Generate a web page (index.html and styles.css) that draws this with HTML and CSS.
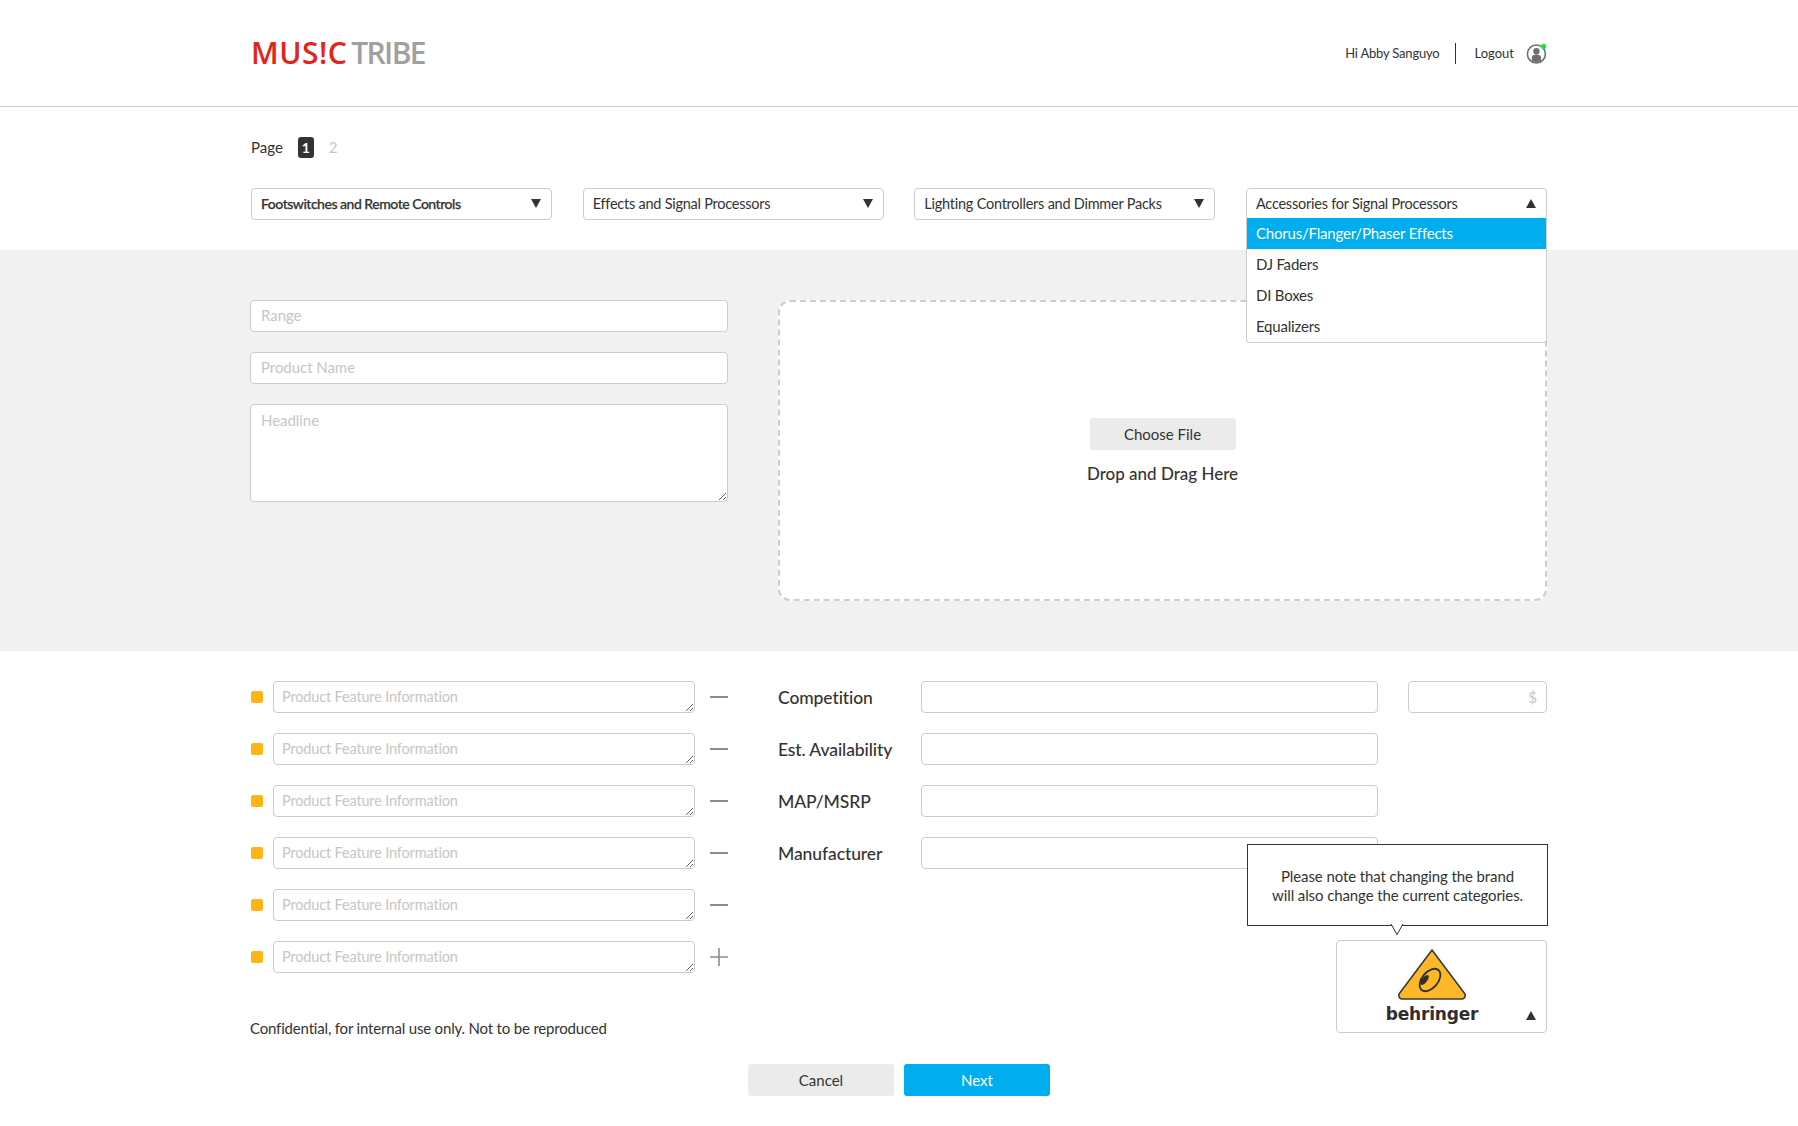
FILE: index.html
```html
<!DOCTYPE html>
<html lang="en">
<head>
    <meta charset="UTF-8">
    <meta name="viewport" content="width=device-width, initial-scale=1.0">
    <title>Music Tribe - New Product</title>
    <link rel="stylesheet" href="styles.css">
</head>
<body>
    <header class="site-header">
        <div class="wrap header-inner">
            <div class="logo"><span class="logo-red">MUS!C</span><span class="logo-grey">TRIBE</span></div>
            <div class="user-area">
                <span class="user-name">Hi Abby Sanguyo</span>
                <span class="user-sep"></span>
                <a class="logout">Logout</a>
                <span class="avatar">
                    <svg width="21" height="21" viewBox="0 0 21 21">
                        <circle cx="10.4" cy="11" r="9" fill="#fff" stroke="#6f6f6f" stroke-width="1.6"/>
                        <circle cx="10.4" cy="8.2" r="3.2" fill="#6f6f6f"/>
                        <path d="M5.8 17.8 V14.6 C5.8 12.4 7.6 11.4 10.4 11.4 C13.2 11.4 15 12.4 15 14.6 V17.8 C12.4 19.4 8.4 19.4 5.8 17.8 Z" fill="#6f6f6f"/>
                        <circle cx="17.6" cy="3.4" r="2.6" fill="#22e33a"/>
                    </svg>
                </span>
            </div>
        </div>
    </header>

    <section class="wrap top-section">
        <div class="pager">
            <span class="pager-label">Page</span>
            <span class="pager-current">1</span>
            <span class="pager-other">2</span>
        </div>
        <div class="select-row">
            <div class="select select-strong"><span>Footswitches and Remote Controls</span><i class="caret-down"></i></div>
            <div class="select"><span>Effects and Signal Processors</span><i class="caret-down"></i></div>
            <div class="select"><span>Lighting Controllers and Dimmer Packs</span><i class="caret-down"></i></div>
            <div class="select select-open">
                <span>Accessories for Signal Processors</span><i class="caret-up"></i>
                <ul class="select-menu">
                    <li class="active">Chorus/Flanger/Phaser Effects</li>
                    <li>DJ Faders</li>
                    <li>DI Boxes</li>
                    <li>Equalizers</li>
                </ul>
            </div>
        </div>
    </section>

    <section class="grey-band">
        <div class="wrap band-inner">
            <div class="band-fields">
                <input type="text" class="field" placeholder="Range">
                <input type="text" class="field" placeholder="Product Name">
                <textarea class="field field-headline" placeholder="Headline"></textarea>
            </div>
            <div class="dropzone">
                <button class="btn btn-grey">Choose File</button>
                <p class="drop-text">Drop and Drag Here</p>
            </div>
        </div>
    </section>

    <section class="wrap details">
        <div class="features">
            <div class="feature-row">
                <span class="bullet"></span>
                <textarea class="field field-feature" placeholder="Product Feature Information"></textarea>
                <span class="dash"></span>
            </div>
            <div class="feature-row">
                <span class="bullet"></span>
                <textarea class="field field-feature" placeholder="Product Feature Information"></textarea>
                <span class="dash"></span>
            </div>
            <div class="feature-row">
                <span class="bullet"></span>
                <textarea class="field field-feature" placeholder="Product Feature Information"></textarea>
                <span class="dash"></span>
            </div>
            <div class="feature-row">
                <span class="bullet"></span>
                <textarea class="field field-feature" placeholder="Product Feature Information"></textarea>
                <span class="dash"></span>
            </div>
            <div class="feature-row">
                <span class="bullet"></span>
                <textarea class="field field-feature" placeholder="Product Feature Information"></textarea>
                <span class="dash"></span>
            </div>
            <div class="feature-row">
                <span class="bullet"></span>
                <textarea class="field field-feature" placeholder="Product Feature Information"></textarea>
                <svg class="plus" width="18" height="18" viewBox="0 0 18 18">
                    <path d="M0 9 H18 M9 0 V18" stroke="#8c8c8c" stroke-width="1.6" fill="none"/>
                </svg>
            </div>
            <p class="confidential">Confidential, for internal use only. Not to be reproduced</p>
        </div>

        <div class="product-info">
            <div class="info-row">
                <label class="info-label">Competition</label>
                <input type="text" class="field info-input">
                <input type="text" class="field price-input" placeholder="$">
            </div>
            <div class="info-row">
                <label class="info-label">Est. Availability</label>
                <input type="text" class="field info-input">
            </div>
            <div class="info-row">
                <label class="info-label">MAP/MSRP</label>
                <input type="text" class="field info-input">
            </div>
            <div class="info-row">
                <label class="info-label">Manufacturer</label>
                <input type="text" class="field info-input">
            </div>
            <div class="brand-area">
                <div class="tooltip">
                    Please note that changing the brand<br>will also change the current categories.
                    <svg class="tooltip-arrow" width="14" height="12" viewBox="0 0 14 12">
                        <path d="M1 0 L7 10.5 L13 0" fill="#fff" stroke="#333" stroke-width="1"/>
                    </svg>
                </div>
                <div class="brand-box">
                    <div class="brand-logo">
                        <svg width="72" height="52" viewBox="0 0 72 52">
                            <path d="M36 1 L69 45 Q70 50 65 50 H7 Q2 50 3 45 Z" fill="#fdb827" stroke="#3a3a3a" stroke-width="1.6" stroke-linejoin="round"/>
                            <ellipse cx="34" cy="31" rx="13" ry="8" transform="rotate(-50 34 31)" fill="none" stroke="#2e2e2e" stroke-width="1.8"/>
                            <ellipse cx="28.5" cy="31" rx="2.6" ry="6" transform="rotate(40 28.5 31)" fill="#2e2e2e"/>
                        </svg>
                        <span class="brand-name">behringer</span>
                    </div>
                    <i class="caret-up"></i>
                </div>
            </div>
        </div>
    </section>

    <div class="actions">
        <button class="btn btn-grey">Cancel</button>
        <button class="btn btn-blue">Next</button>
    </div>
</body>
</html>
```

FILE: styles.css
```css
/* Page basics */
* {
    box-sizing: border-box;
}
body {
    margin: 0;
    height: 1126px;
    overflow: hidden;
    background-color: #fff;
    font-family: "Lato", "Open Sans", Arial, sans-serif;
    font-size: 15px;
    color: #333;
}
.wrap {
    width: 1297px;
    margin: 0 251px 0 250px;
}

/* Header */
.site-header {
    height: 107px;
    border-bottom: 1px solid #ccc;
}
.header-inner {
    height: 106px;
    display: flex;
    align-items: center;
    justify-content: space-between;
    padding: 0 0 0 1px;
}
.logo {
    display: flex;
    align-items: center;
    gap: 4px;
    font-family: "Open Sans", Arial, sans-serif;
    font-size: 30px;
    line-height: 30px;
}
.logo-red {
    color: #e1251b;
    font-weight: 600;
    letter-spacing: 0.5px;
}
.logo-grey {
    color: #a0a0a0;
    font-weight: 600;
    letter-spacing: -1.6px;
}
.user-area {
    display: flex;
    align-items: center;
    font-size: 13px;
    color: #333;
}
.user-name {
    letter-spacing: -0.2px;
}
.user-sep {
    width: 1px;
    height: 21px;
    margin: 0 19px 0 15px;
    background-color: #333;
}
.avatar {
    display: flex;
    margin-left: 12px;
}

/* Pager + category selects */
.top-section {
    height: 143px;
    padding: 0 0 0 1px;
}
.pager {
    height: 81px;
    display: flex;
    align-items: center;
    padding-bottom: 1px;
}
.pager-label {
    font-size: 15px;
    margin-right: 15px;
}
.pager-current {
    width: 16px;
    height: 21px;
    line-height: 21px;
    margin-right: 15px;
    text-align: center;
    background-color: #333;
    color: #fff;
    border-radius: 3px;
    font-weight: 700;
    font-size: 14px;
}
.pager-other {
    width: 10px;
    font-size: 15px;
    color: #c8c8c8;
}
.select-row {
    display: flex;
    justify-content: space-between;
}
.select {
    position: relative;
    width: 301px;
    height: 32px;
    padding: 0 10px 2px 9px;
    display: flex;
    align-items: center;
    justify-content: space-between;
    background-color: #fff;
    border: 1px solid #ccc;
    border-radius: 4px;
    font-size: 14.5px;
    letter-spacing: -0.24px;
}
.select-strong {
    font-size: 14px;
    font-weight: 500;
    letter-spacing: -0.48px;
    -webkit-text-stroke: 0.25px #333;
}
.select-open {
    z-index: 5;
}
.caret-down, .caret-up {
    display: block;
    width: 0;
    height: 0;
    border-left: 5px solid transparent;
    border-right: 5px solid transparent;
}
.caret-down {
    border-top: 9px solid #333;
}
.caret-up {
    border-bottom: 9px solid #333;
}
.select-menu {
    position: absolute;
    left: -1px;
    right: -1px;
    top: 29px;
    margin: 0;
    padding: 0;
    list-style: none;
    font-size: 15px;
    letter-spacing: -0.2px;
    background-color: #fff;
    border: 1px solid #ccc;
    border-top: none;
    border-radius: 0 0 4px 4px;
}
.select-menu li {
    height: 31px;
    line-height: 31px;
    padding: 0 9px;
}
.select-menu li.active {
    background-color: #00adef;
    color: #fff;
}

/* Grey band */
.grey-band {
    height: 401px;
    padding-top: 50px;
    background-color: #f1f1f1;
}
.band-inner {
    display: flex;
    justify-content: space-between;
}
.band-fields {
    width: 478px;
    display: flex;
    flex-direction: column;
    gap: 20px;
}
.band-fields .field {
    padding-left: 10px;
    padding-bottom: 2px;
    letter-spacing: -0.05px;
}
.field {
    display: block;
    height: 32px;
    padding: 0 9px;
    background-color: #fff;
    border: 1px solid #ccc;
    border-radius: 4px;
    font-family: inherit;
    font-size: 15px;
    color: #333;
    outline: none;
}
.field::placeholder {
    color: #c6c6c6;
    opacity: 1;
}
textarea.field {
    padding-top: 5px;
    line-height: 20px;
    resize: both;
}
.field-headline {
    width: 478px;
    height: 98px;
}
.dropzone {
    width: 769px;
    height: 301px;
    padding-top: 2px;
    display: flex;
    flex-direction: column;
    align-items: center;
    justify-content: center;
    border: 2px dashed #cdcdcd;
    border-radius: 12px;
    background-color: #fff;
}
.drop-text {
    margin: 13px 0 0;
    font-size: 17px;
    font-weight: 500;
    line-height: 22px;
}

/* Buttons */
.btn {
    width: 146px;
    height: 32px;
    border: none;
    border-radius: 3px;
    font-family: inherit;
    font-size: 15px;
    cursor: pointer;
}
.btn-grey {
    background-color: #ebebeb;
    color: #333;
}
.btn-blue {
    background-color: #00adef;
    color: #fff;
}

/* Features + product info */
.details {
    height: 413px;
    display: flex;
    justify-content: space-between;
    padding-top: 30px;
}
.features {
    width: 478px;
    display: flex;
    flex-direction: column;
    gap: 20px;
}
.feature-row {
    display: flex;
    align-items: center;
    height: 32px;
    padding-left: 1px;
}
.bullet {
    width: 12px;
    height: 12px;
    margin-right: 10px;
    background-color: #fdb515;
    border-radius: 2px;
}
textarea.field-feature {
    width: 422px;
    height: 32px;
    margin-right: 15px;
    padding-left: 8px;
    font-size: 14.5px;
    letter-spacing: -0.16px;
}
.dash {
    width: 18px;
    height: 2px;
    background-color: #8c8c8c;
}
.plus {
    display: block;
}
.confidential {
    margin: 25px 0 0;
    font-size: 15px;
    line-height: 20px;
    letter-spacing: -0.18px;
}
.product-info {
    width: 769px;
    display: flex;
    flex-direction: column;
    gap: 20px;
}
.info-row {
    display: flex;
    align-items: center;
    height: 32px;
}
.info-label {
    width: 143px;
    font-size: 17.5px;
    font-weight: 500;
    letter-spacing: -0.1px;
}
.info-input {
    width: 457px;
}
.price-input {
    width: 139px;
    margin-left: 30px;
    text-align: right;
}
.brand-area {
    position: relative;
    display: flex;
    justify-content: flex-end;
    padding-top: 51px;
}
.brand-box {
    position: relative;
    width: 211px;
    height: 93px;
    display: flex;
    justify-content: center;
    background-color: #fff;
    border: 1px solid #ccc;
    border-radius: 4px;
}
.brand-box .caret-up {
    position: absolute;
    right: 10px;
    bottom: 12px;
}
.brand-logo {
    display: flex;
    flex-direction: column;
    align-items: center;
    margin: 8px 19px 0 0;
}
.brand-logo svg {
    display: block;
}
.brand-name {
    margin-top: 3px;
    font-family: "DejaVu Sans", Arial, sans-serif;
    font-size: 17px;
    font-weight: 700;
    line-height: 20px;
    letter-spacing: -0.2px;
    color: #2e2e2e;
}
.tooltip {
    position: absolute;
    right: -1px;
    top: -45px;
    width: 301px;
    height: 82px;
    padding: 22px 0 0;
    text-align: center;
    font-size: 15px;
    line-height: 19px;
    letter-spacing: -0.1px;
    background-color: #fff;
    border: 1px solid #333;
    z-index: 3;
}
.tooltip-arrow {
    position: absolute;
    left: 142px;
    top: 100%;
    margin-top: -1px;
    display: block;
}

/* Bottom buttons */
.actions {
    display: flex;
    gap: 10px;
    padding-left: 748px;
}
```
